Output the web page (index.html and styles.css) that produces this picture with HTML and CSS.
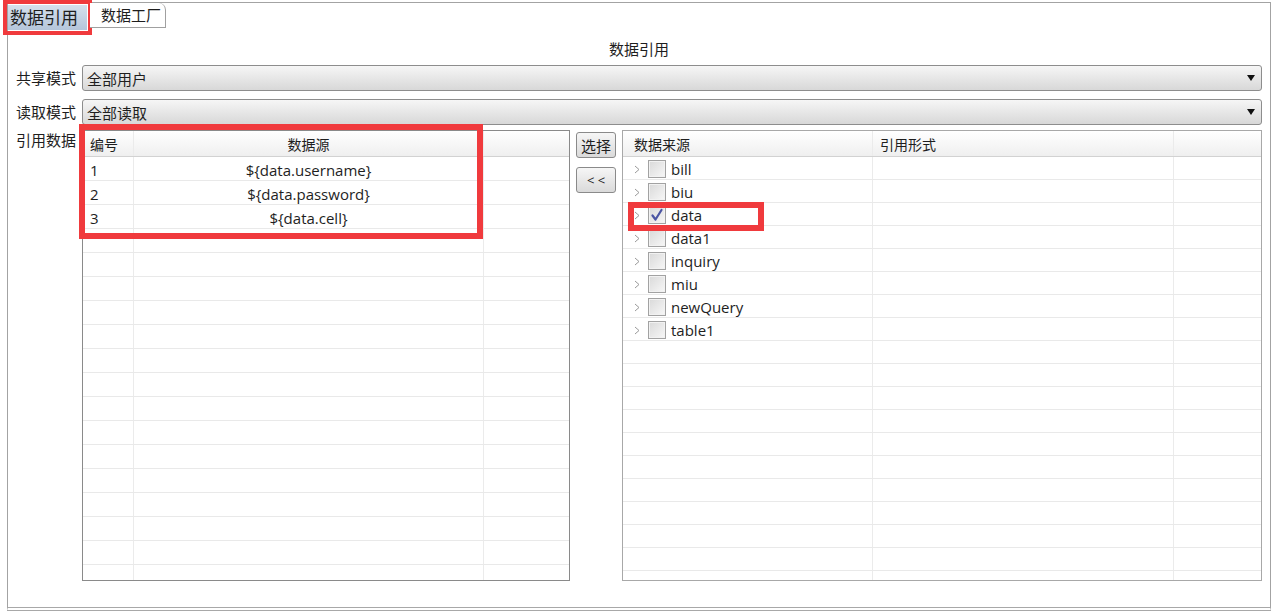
FILE: index.html
```html
<!DOCTYPE html>
<html lang="zh-CN">
<head>
    <meta charset="UTF-8">
    <title>数据引用</title>
    <link rel="stylesheet" href="styles.css">
</head>
<body>
    <div class="window">
        <div class="tabs">
            <div class="tab tab-active">数据引用</div>
            <div class="tab">数据工厂</div>
        </div>

        <div class="panel">
            <div class="panel-title">数据引用</div>

            <div class="form-row">
                <span class="form-label">共享模式</span>
                <div class="select">全部用户<span class="select-arrow"></span></div>
            </div>

            <div class="form-row form-row-2">
                <span class="form-label">读取模式</span>
                <div class="select">全部读取<span class="select-arrow"></span></div>
            </div>

            <div class="ref-row">
                <span class="form-label">引用数据</span>

                <!-- selected fields -->
                <div class="grid grid-left">
                    <div class="grid-head">
                        <div class="cell c-no">编号</div>
                        <div class="cell c-src center">数据源</div>
                        <div class="cell c-rest"></div>
                    </div>
                    <div class="grid-body" id="left-rows"></div>
                    <div class="mark mark-left"></div>
                </div>

                <div class="btn-col">
                    <button class="btn">选择</button>
                    <button class="btn btn-back">&lt; &lt;</button>
                </div>

                <!-- data source tree -->
                <div class="grid grid-right">
                    <div class="grid-head">
                        <div class="cell c-from">数据来源</div>
                        <div class="cell c-form">引用形式</div>
                        <div class="cell c-rest"></div>
                    </div>
                    <div class="grid-body" id="right-rows"></div>
                    <div class="mark mark-data"></div>
                </div>
            </div>
        </div>
    </div>

    <script>
        const fields = ['${data.username}', '${data.password}', '${data.cell}'];
        const sources = ['bill', 'biu', 'data', 'data1', 'inquiry', 'miu', 'newQuery', 'table1'];

        const chevron = '<svg class="chev" width="6" height="9" viewBox="0 0 6 9"><path d="M1 1 L5 4.5 L1 8" fill="none" stroke="#9a9a9a" stroke-width="1"/></svg>';
        const tick = '<svg width="16" height="16" viewBox="0 0 16 16"><path d="M3.5 8.5 L6.5 12.5 L12.5 3" fill="none" stroke="#4b55a3" stroke-width="2.2" stroke-linecap="round" stroke-linejoin="round"/></svg>';

        let left = '';
        for (let i = 0; i < 18; i++) {
            left += `
                <div class="grid-row">
                    <div class="cell c-no">${fields[i] ? i + 1 : ''}</div>
                    <div class="cell c-src center">${fields[i] || ''}</div>
                    <div class="cell c-rest"></div>
                </div>`;
        }
        document.getElementById('left-rows').innerHTML = left;

        let right = '';
        for (let i = 0; i < 19; i++) {
            const name = sources[i];
            const node = name ? `
                <span class="node">${chevron}<span class="check">${name === 'data' ? tick : ''}</span><span>${name}</span></span>` : '';
            right += `
                <div class="grid-row">
                    <div class="cell c-from">${node}</div>
                    <div class="cell c-form"></div>
                    <div class="cell c-rest"></div>
                </div>`;
        }
        document.getElementById('right-rows').innerHTML = right;
    </script>
</body>
</html>
```

FILE: styles.css
```css
* {
    margin: 0;
    padding: 0;
    box-sizing: border-box;
}

body {
    font-family: "Open Sans", "Noto Sans CJK SC", sans-serif;
    font-size: 15px;
    color: #1e1e1e;
    background: #fff;
}

.window {
    margin: 2px 0 0 7px;
    width: 1264px;
    height: 609px;
    border: 1px solid #a3a3a3;
    border-bottom: 4px double #a8a8a8;
}

/* Tabs */
.tabs {
    display: flex;
    align-items: flex-start;
    height: 30px;
}

.tab {
    height: 25px;
    line-height: 24px;
    padding: 0 4px 0 11px;
    margin-left: 3px;
    border-right: 1px solid #a0a0a0;
    border-bottom: 1px solid #a0a0a0;
    border-top-right-radius: 7px;
    background: #fff;
}

.tab-active {
    margin: 2px 0 0 0;
    width: 79px;
    padding: 0 0 0 2px;
    font-size: 17px;
    line-height: 25px;
    border: none;
    border-radius: 0;
    background: linear-gradient(#d6e0ec, #b4c5da);
    outline: 4px solid #f03a3d;
    outline-offset: 1px;
}

/* Panel */
.panel {
    padding: 0 8px;
}

.panel-title {
    margin-top: 6px;
    line-height: 20px;
    text-align: center;
}

.form-row {
    display: flex;
    align-items: center;
    height: 26px;
    margin-top: 6px;
}

.form-row-2 {
    margin-top: 8px;
}

.form-label {
    width: 66px;
    flex-shrink: 0;
    line-height: 20px;
}

.select {
    flex: 1;
    display: flex;
    align-items: center;
    height: 26px;
    padding: 0 6px 0 4px;
    border: 1px solid #8d8d8d;
    border-radius: 3px;
    background: linear-gradient(#f6f6f6, #d8d8d8);
}

.select-arrow {
    margin-left: auto;
    width: 0;
    height: 0;
    border-left: 4.5px solid transparent;
    border-right: 4.5px solid transparent;
    border-top: 6px solid #111;
}

/* Reference area */
.ref-row {
    display: flex;
    align-items: flex-start;
    margin-top: 5px;
}

.grid {
    position: relative;
    display: flex;
    flex-direction: column;
    height: 451px;
    background: #fff;
}

.grid-body {
    flex: 1;
    min-height: 0;
    overflow: hidden;
}

.grid-left {
    width: 488px;
    border: 1px solid #8a8a8a;
}

.grid-right {
    flex: 1;
    border: 1px solid #a8a8a8;
}

.grid-head {
    display: flex;
    flex-shrink: 0;
    height: 26px;
    line-height: 27px;
    font-size: 14px;
    border-bottom: 1px solid #d2d2d2;
    background: linear-gradient(#ffffff, #efefef);
}

.grid-row {
    display: flex;
    height: 24px;
    line-height: 26px;
    border-bottom: 1px solid #e9e9e9;
}

.grid-right .grid-row {
    height: 23px;
    line-height: 22px;
}

.cell {
    padding: 0 7px;
    border-right: 1px solid #ebebeb;
    white-space: nowrap;
    overflow: hidden;
}

.center {
    text-align: center;
}

.c-no { width: 51px; }
.c-src { width: 350px; }
.c-from { width: 250px; padding-left: 11px; }
.c-form { width: 301px; }
.c-rest { flex: 1; border-right: none; }

.node {
    display: flex;
    align-items: center;
    height: 22px;
    padding-top: 2px;
}

.chev {
    margin-right: 8px;
}

.check {
    display: flex;
    align-items: center;
    justify-content: center;
    width: 18px;
    height: 18px;
    margin-right: 5px;
    border: 1px solid #a2a2a2;
    background: linear-gradient(135deg, #d9d9d9, #f7f7f7);
    box-shadow: inset 0 0 0 1px #f2f2f2;
}

/* Buttons */
.btn-col {
    display: flex;
    flex-direction: column;
    gap: 9px;
    width: 40px;
    margin: 2px 6px 0;
}

.btn {
    height: 26px;
    font-family: inherit;
    font-size: 15px;
    color: #1e1e1e;
    border: 1px solid #8a8a8a;
    border-radius: 3px;
    background: linear-gradient(#f6f6f6, #dadada);
}

.btn-back {
    font-size: 13px;
}

/* Red annotation boxes */
.mark {
    position: absolute;
    border: 6px solid #f03a3d;
}

.mark-left {
    left: -4px;
    top: -7px;
    width: 404px;
    height: 115px;
}

.mark-data {
    left: 5px;
    top: 71px;
    width: 136px;
    height: 29px;
}
```
